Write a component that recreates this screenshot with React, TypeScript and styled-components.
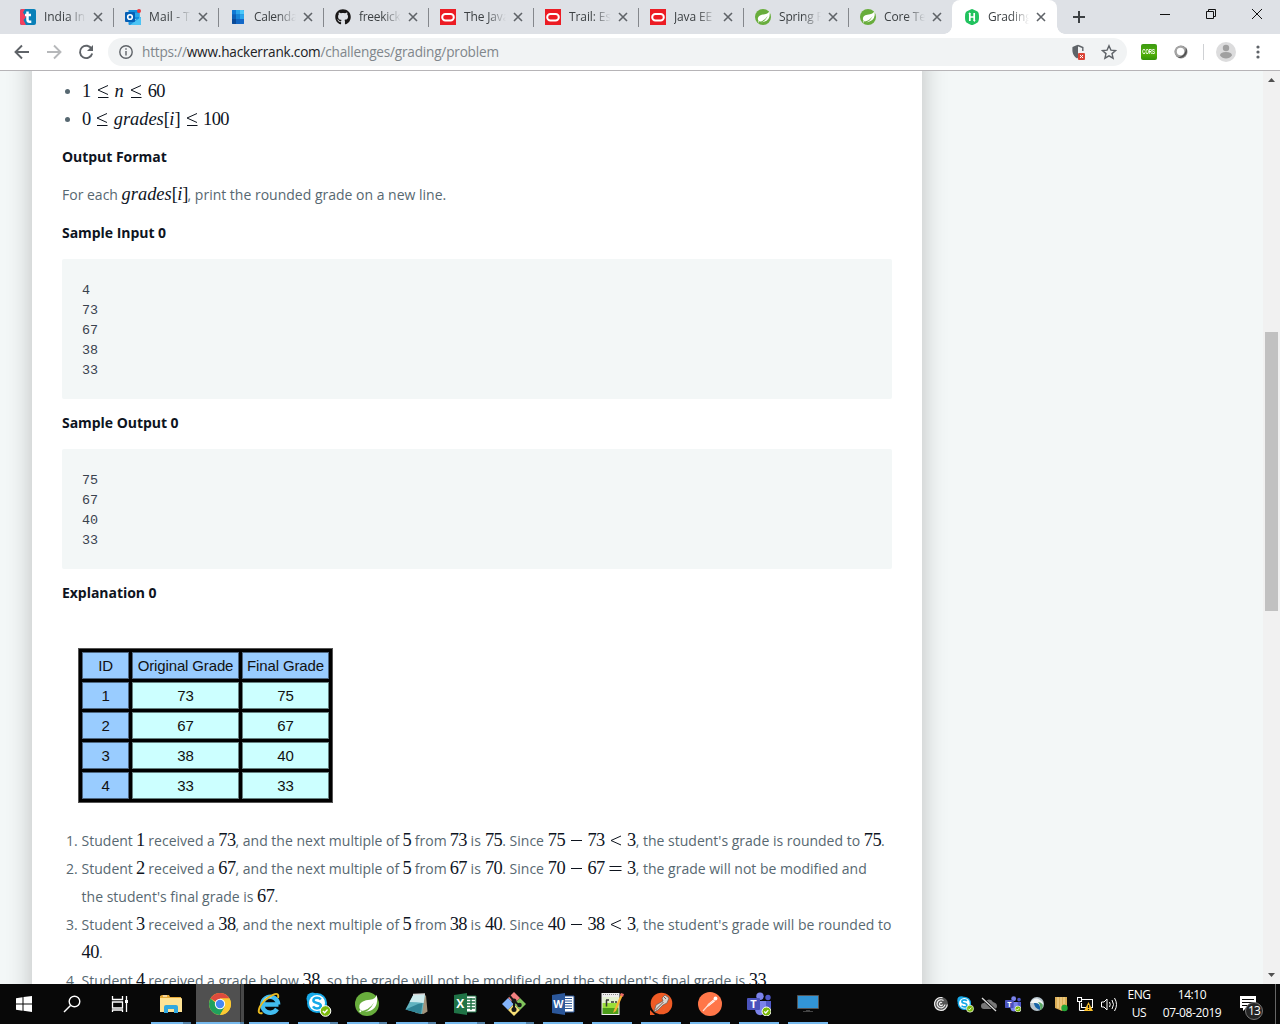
import React from "react";
import styled, { createGlobalStyle } from "styled-components";
import { FaGithub } from "react-icons/fa";

const GlobalStyle = createGlobalStyle`
  * { box-sizing: border-box; }
  body { margin: 0; overflow: hidden; background: #fff; }
`;

const uiFont = `"Open Sans", "Noto Sans", sans-serif`;

const Screen = styled.div`
  width: 1280px;
  height: 1024px;
  display: flex;
  flex-direction: column;
  overflow: hidden;
  font-family: ${uiFont};
`;

/* ---------- browser tabs ---------- */

const TabStrip = styled.header`
  height: 34px;
  flex: none;
  display: flex;
  background: #dee1e6;
  padding-left: 8px;
`;

const Tab = styled.div<{ $active?: boolean; $divider?: boolean }>`
  position: relative;
  width: 105px;
  height: 34px;
  display: flex;
  align-items: center;
  padding: 0 0 0 12px;
  background: ${(p) => (p.$active ? "#fff" : "transparent")};
  border-radius: 8px 8px 0 0;
  margin-left: ${(p) => (p.$active ? "-1px" : "0")};
  ${(p) =>
    p.$divider &&
    `&::after { content: ""; position: absolute; right: -1px; top: 8px; width: 1px; height: 19px; background: #84878c; }`}
  ${(p) =>
    p.$active &&
    `&::before, &::after { content: ""; position: absolute; bottom: 0; width: 8px; height: 8px; }
     &::before { left: -8px; background: radial-gradient(circle at 0 0, transparent 7.5px, #fff 8px); }
     &::after { right: -8px; background: radial-gradient(circle at 100% 0, transparent 7.5px, #fff 8px); }`}
`;

const Favicon = styled.span`
  width: 16px;
  height: 16px;
  flex: none;
  display: flex;
  svg { width: 16px; height: 16px; }
`;

const TabTitle = styled.span<{ $spacing: number; $w: number }>`
  width: ${(p) => p.$w}px;
  margin-left: 8px;
  overflow: hidden;
  white-space: nowrap;
  font-size: 12px;
  line-height: 18px;
  letter-spacing: ${(p) => p.$spacing}px;
  color: #3c4043;
  mask-image: linear-gradient(90deg, #000 55%, transparent 100%);
`;

const CloseMark = styled.svg`
  width: 10px;
  height: 10px;
  margin-left: 7px;
  flex: none;
  stroke: #5f6368;
  stroke-width: 1.6;
`;

const NewTab = styled.svg`
  width: 12px;
  height: 12px;
  margin: 11px 0 0 16px;
  stroke: #3c4043;
  stroke-width: 2;
`;

const WindowControls = styled.div`
  display: flex;
  margin-left: auto;
  svg { width: 46px; height: 28px; fill: none; stroke: #111; stroke-width: 1; }
`;

/* ---------- address row ---------- */

const Toolbar = styled.div`
  height: 37px;
  flex: none;
  display: flex;
  align-items: center;
  background: #fff;
  border-bottom: 1px solid #b6b4b7;
`;

const NavButtons = styled.div`
  display: flex;
  width: 108px;
  height: 36px;
  padding-left: 14px;
  align-items: center;
  gap: 16px;
  svg { width: 16px; height: 16px; fill: none; stroke: #5f6368; stroke-width: 1.9; }
`;

const Omnibox = styled.div`
  width: 1019px;
  height: 28px;
  display: flex;
  align-items: center;
  border-radius: 14px;
  background: #f1f3f4;
  padding: 0 10px 0 11px;
`;

const Url = styled.span`
  margin-left: 9px;
  font-size: 13.6px;
  line-height: 20px;
  letter-spacing: -0.2px;
  color: #80868b;
  white-space: nowrap;
  b { font-weight: 400; color: #202124; }
`;

const OmniActions = styled.span`
  display: flex;
  gap: 14px;
  margin-left: auto;
`;

const Extensions = styled.div`
  flex: 1;
  display: flex;
  align-items: center;
  padding-left: 14px;
`;

const CorsBadge = styled.span`
  width: 16px;
  height: 16px;
  border-radius: 2px;
  background: linear-gradient(#3c9a12, #52b108 60%, #349209);
  color: #fff;
  display: flex;
  align-items: center;
  justify-content: center;
  span { font: bold 8px/10px "Liberation Sans", sans-serif; transform: scale(0.55, 0.95); }
`;

const RingIcon = styled.svg`
  width: 14px;
  height: 14px;
  margin-left: 17px;
`;

const BarDivider = styled.span`
  width: 1px;
  height: 16px;
  margin: 0 12px 0 15px;
  background: #cfd1d4;
`;

const Kebab = styled.svg`
  width: 4px;
  height: 14px;
  margin-left: 20px;
  fill: #5f6368;
`;

/* ---------- page ---------- */

const Viewport = styled.main`
  height: 913px;
  flex: none;
  display: flex;
  background: #f3f7f7;
  overflow: hidden;
`;

const PageArea = styled.div`
  flex: 1;
  padding-left: 32px;
  overflow: hidden;
`;

const Sheet = styled.article`
  width: 890px;
  height: 960px;
  margin-top: -20px;
  padding: 26px 30px 0;
  background: #fff;
  box-shadow: 0 0 24px rgba(0, 0, 0, 0.23);
  color: #576871;
  font-size: 14px;
  line-height: 28px;
`;

const Constraints = styled.ul`
  list-style: none;
  margin: 0 0 10px;
  padding: 0;
`;

const Constraint = styled.li`
  display: flex;
  align-items: center;
  height: 28px;
  &::before {
    content: "";
    width: 5px;
    height: 5px;
    margin: 0 12px 0 3px;
    border-radius: 50%;
    background: #576871;
  }
`;

const Heading = styled.h3`
  margin: 0;
  height: 28px;
  color: #0e141e;
  font-size: 14px;
  font-weight: 700;
  letter-spacing: -0.04px;
  line-height: 28px;
`;

const Paragraph = styled.p`
  margin: 10px 0;
  height: 28px;
  white-space: nowrap;
`;

const Code = styled.pre`
  margin: 12px 0 10px;
  padding: 22px 20px 18px;
  border-radius: 2px;
  background: #f3f7f7;
  color: #39424e;
  font: 13.4px/20px "Liberation Mono", monospace;
`;

const MathBox = styled.span<{ $w: number }>`
  display: inline-flex;
  justify-content: space-between;
  width: ${(p) => p.$w}px;
  height: 20px;
  align-items: baseline;
  vertical-align: baseline;
  white-space: nowrap;
  color: #0e141e;
  font: 18.4px/20px "Liberation Serif", serif;
  letter-spacing: -0.55px;
  i { letter-spacing: 0; }
  svg { align-self: center; fill: none; stroke: #0e141e; stroke-width: 1; }
`;

const GradeTable = styled.div`
  display: grid;
  width: 255px;
  height: 155px;
  margin: 41px 0 24px 16px;
  grid-template-columns: 47px 107px 87px;
  grid-template-rows: repeat(5, 27px);
  gap: 3px;
  padding: 3px;
  background: #000;
  border: 1px solid #555;
`;

const Cell = styled.span<{ $head?: boolean }>`
  display: flex;
  align-items: center;
  justify-content: center;
  background: ${(p) => (p.$head ? "#99ccff" : "#ccffff")};
  border: 1px solid ${(p) => (p.$head ? "#4d6680" : "#668080")};
  color: #111;
  white-space: nowrap;
  letter-spacing: -0.14px;
  font: 15px/20px "Liberation Sans", sans-serif;
`;

const Steps = styled.ol`
  margin: 0;
  padding: 0;
  list-style: none;
`;

const Step = styled.li`
  display: flex;
`;

const StepNumber = styled.span`
  width: 19.6px;
  padding-left: 4px;
  flex: none;
`;

const StepText = styled.div`
  flex: none;
  display: flex;
  flex-direction: column;
`;

const Line = styled.span`
  display: flex;
  align-items: baseline;
  height: 28px;
  white-space: pre;
`;

const Words = styled.span<{ $w?: number }>`
  display: block;
  ${(p) => (p.$w ? `width: ${p.$w}px;` : "")}
  white-space: pre;
`;

const Scrollbar = styled.div`
  width: 17px;
  flex: none;
  display: flex;
  flex-direction: column;
  align-items: center;
  background: #f1f1f1;
`;

const ScrollArrow = styled.svg`
  width: 17px;
  height: 17px;
  fill: #505050;
`;

const Thumb = styled.div`
  width: 13px;
  height: 279px;
  margin: 244px 0 auto;
  background: #c1c1c1;
`;

/* ---------- taskbar ---------- */

const Taskbar = styled.footer`
  height: 40px;
  flex: none;
  display: flex;
  background: #080808;
  color: #fff;
`;

const SystemButtons = styled.div`
  display: flex;
  width: 147px;
`;

const Apps = styled.div`
  display: flex;
  gap: 1px;
`;

const TaskButton = styled.div<{ $active?: boolean; $open?: boolean; $stacked?: boolean }>`
  position: relative;
  width: 48px;
  height: 40px;
  display: flex;
  align-items: center;
  justify-content: center;
  background: ${(p) =>
    p.$active ? "linear-gradient(90deg, #505050 44px, #242424 44px, #242424 45px, #484848 45px)" : "transparent"};
  svg { width: 24px; height: 24px; }
  ${(p) =>
    p.$open &&
    `&::after {
      content: ""; position: absolute; bottom: 0; height: 2px;
      left: ${p.$active ? 0 : 4}px; right: ${p.$active ? 0 : 4}px;
      background: linear-gradient(90deg, #76b9ed ${p.$stacked ? (p.$active ? "44px" : "32px") : "100%"}, #5482a8 0);
    }`}
`;

const Tray = styled.div`
  margin-left: auto;
  display: flex;
  align-items: center;
`;

const TrayIcons = styled.div`
  display: flex;
  gap: 8px;
  svg { width: 16px; height: 16px; }
`;

const TrayText = styled.div<{ $w: number; $ml: number }>`
  width: ${(p) => p.$w}px;
  margin-left: ${(p) => p.$ml}px;
  display: flex;
  flex-direction: column;
  align-items: center;
  font-size: 12px;
  line-height: 18px;
  padding-bottom: 1px;
  letter-spacing: -0.4px;
  white-space: nowrap;
`;

const Notifications = styled.div`
  position: relative;
  width: 26px;
  height: 40px;
  margin: 0 10px 0 17px;
  > svg { position: absolute; left: 0; top: 11px; width: 18px; height: 16px; }
`;

const Count = styled.span`
  position: absolute;
  left: 6px;
  top: 18px;
  width: 18px;
  height: 18px;
  border-radius: 50%;
  border: 1px solid #777;
  background: #252525;
  font-size: 12px;
  line-height: 16px;
  text-align: center;
  letter-spacing: -0.8px;
`;

const DesktopEdge = styled.span`
  width: 1px;
  height: 40px;
  margin-right: 4px;
  background: #666;
`;

/* ---------- drawings ---------- */

const glyph = { fontFamily: "Open Sans, sans-serif", fontWeight: 700, fill: "#fff", textAnchor: "middle" as const };

const TimesIcon = () => (
  <svg viewBox="0 0 16 16">
    <rect width="16" height="16" rx="2" fill="#0a80b8" />
    <path d="M2 0H5L3 3.5 6 8 3.5 11 6 16H2a2 2 0 0 1-2-2V2a2 2 0 0 1 2-2z" fill="#f4405e" />
    <path d="M7.500 2.500v8q0 2.300 2.200 2.300h1.600M5 6h6" stroke="#fff" strokeWidth="2.500" fill="none" />
  </svg>
);

const OutlookIcon = () => (
  <svg viewBox="0 0 16 16">
    <path d="M3.500 1h11v9h-11z" fill="#1490df" />
    <path d="M3.500 4h5.500v4H3.500z" fill="#0a5ba8" />
    <path d="M9 4h5.500v4H9z" fill="#28a8ea" />
    <path d="M3.500 8l6 3 6.500-3v7a1 1 0 0 1-1 1H4.500a1 1 0 0 1-1-1z" fill="#1d93dd" />
    <path d="M5 16L16 8v7a1 1 0 0 1-1 1z" fill="#4cc4f5" />
    <rect y="3" width="10" height="10" rx="1" fill="#0560b6" />
    <circle cx="5" cy="8" r="2.300" fill="none" stroke="#fff" strokeWidth="1.600" />
    <circle cx="14" cy="2" r="2" fill="#e8383f" />
  </svg>
);

const CalendarIcon = () => (
  <svg viewBox="0 0 16 16">
    <rect x="2" y="1" width="12" height="14" rx="1" fill="#1166c2" />
    <path d="M3 1h3v4.500H2V2a1 1 0 0 1 1-1z" fill="#0f78d4" />
    <path d="M6 1h4v4.500H6z" fill="#2ba5ea" />
    <path d="M10 1h3a1 1 0 0 1 1 1v3.500h-4z" fill="#4bc8fa" />
    <path d="M10 5.500h4v4.500h-4z" fill="#2aa4ec" />
    <path d="M6 5.500h4v4.500h-4z" fill="#1684d8" />
    <path d="M2 5.500h4v4.500h-4z" fill="#0d5fb5" />
    <path d="M10 10h4v4a1 1 0 0 1-1 1h-3z" fill="#1368c8" />
    <path d="M2 10h4v5H3a1 1 0 0 1-1-1z" fill="#0a4a98" />
  </svg>
);

const OracleIcon = () => (
  <svg viewBox="0 0 16 16">
    <rect width="16" height="16" fill="#ec1c24" />
    <rect x="2.200" y="5" width="11.600" height="6.500" rx="3.200" fill="none" stroke="#fff" strokeWidth="2" />
  </svg>
);

const HackerRankIcon = () => (
  <svg viewBox="0 0 16 16">
    <path d="M8 0q1 0 5.500 2.600Q15 3.500 15 8t-1.500 5.400Q9 16 8 16t-5.500-2.600Q1 12.500 1 8t1.500-5.400Q7 0 8 0z" fill="#21c25e" />
    <path d="M5.800 4v8M10.200 4v8M5.800 8h4.400" stroke="#fff" strokeWidth="1.700" />
    <path d="M4.300 5L5.800 3.200 6.600 5zM9.400 11.200h2.300L10.200 13z" fill="#fff" />
  </svg>
);

const SpringIcon = () => (
  <svg viewBox="0 0 24 24">
    <circle cx="12" cy="12" r="12" fill="#68ad3c" />
    <path d="M21.800 2.700Q20.500 7 15 7.800 6 8.500 4.500 13q-.8 3 1 5Q8.500 20.500 13.500 19.300 24 16.500 21.800 2.700z" fill="#fff" />
    <path d="M4.500 19.500Q14 18.500 19 10.500 14.500 20 7 20.500z" fill="#68ad3c" />
    <circle cx="5.300" cy="19.300" r="1" fill="#fff" />
  </svg>
);

const Close = () => (
  <CloseMark viewBox="0 0 10 10"><path d="M1 1l8 8M9 1L1 9" /></CloseMark>
);

const Person = () => (
  <svg width="20" height="20" viewBox="0 0 20 20">
    <circle cx="10" cy="10" r="10" fill="#dcdcdd" />
    <circle cx="10" cy="6" r="3.200" fill="#a0a0a0" />
    <path d="M4 13.500q0-3.500 6-3.500t6 3.500q-2.200 3-6 3t-6-3z" fill="#a0a0a0" />
  </svg>
);

const LessEq = () => (
  <svg width="14" height="16" viewBox="0 0 14 16"><path d="M12 2.500L2 7 12 11.500M2 14.500h10.500" /></svg>
);
const Less = () => (
  <svg width="13" height="14" viewBox="0 0 13 14"><path d="M12 3L2 7.500 12 12" /></svg>
);
const Minus = () => (
  <svg width="13" height="14" viewBox="0 0 13 14"><path d="M1 7.500h11" /></svg>
);
const Equals = () => (
  <svg width="13" height="14" viewBox="0 0 13 14"><path d="M.5 5.500h12M.5 9.500h12" /></svg>
);

const ExplorerIcon = () => (
  <svg viewBox="0 0 24 24">
    <path d="M1 4l2-1h7l1 2h11v5H1z" fill="#e6aa38" />
    <path d="M1 6h21q1 0 1 1v13H1z" fill="#ffe394" />
    <path d="M5 21v-6q0-2 2-2h10q2 0 2 2v6h-4v-4H9v4z" fill="#32a9df" />
    <path d="M4 4h4" stroke="#fff" />
  </svg>
);

const ChromeIcon = () => (
  <svg viewBox="0 0 24 24">
    <circle cx="12" cy="12" r="11" fill="#fbc933" />
    <path d="M12 12L2.500 6.500A11 11 0 0 1 21.500 6.500H12z" fill="#dd4b3e" />
    <path d="M2.500 6.500A11 11 0 0 0 12 23l4.800-8.500H12z" fill="#20a15d" />
    <path d="M12 6.500h9.500A11 11 0 0 1 12 23l5-8z" fill="#fbc933" />
    <circle cx="12" cy="12" r="5.200" fill="#fff" />
    <circle cx="12" cy="12" r="4.200" fill="#4688f4" />
  </svg>
);

const ExplorerE = () => (
  <svg viewBox="0 0 24 24">
    <path d="M7 12.500h14.500M20 17a8 8 0 1 1 1.200-4.500" fill="none" stroke="#42bdf0" strokeWidth="4.400" />
    <path d="M6.500 9q3-4.500 8-4" fill="none" stroke="#b3e9ff" strokeWidth="1.500" />
    <path d="M21 6q1.500-6-5-3.200Q7 7 3 14.500q-3.500 8 2.500 6.500" fill="none" stroke="#e9b91f" strokeWidth="1.900" />
  </svg>
);

const CheckBadge = ({ x, y, r }: { x: number; y: number; r: number }) => (
  <g>
    <circle cx={x} cy={y} r={r} fill="#7cba0b" stroke="#fff" strokeWidth="1" />
    <path d={`M${x - r / 2} ${y}l${r / 3} ${r / 3} ${r / 1.8}-${r / 1.6}`} fill="none" stroke="#fff" strokeWidth="1.300" />
  </g>
);

const SkypeIcon = () => (
  <svg viewBox="0 0 24 24" overflow="visible">
    <circle cx="6.500" cy="6.500" r="6" fill="#19a9e8" />
    <circle cx="15" cy="15" r="6" fill="#19a9e8" />
    <circle cx="11" cy="11" r="10" fill="#16aae9" />
    <circle cx="11" cy="11" r="8" fill="#fff" />
    <path d="M14.800 7.500Q13.500 5.800 11 5.800q-3.600 0-3.600 2.500 0 2 3.600 2.600 3.800.6 3.800 2.900 0 2.600-3.800 2.600-2.800 0-4-2" stroke="#15a9e8" strokeWidth="2.500" fill="none" />
    <CheckBadge x={19.500} y={19} r={5.300} />
  </svg>
);

const NotebookIcon = () => (
  <svg viewBox="0 0 24 24">
    <path d="M11 2.500l11 1 1.500 16-4 2.500-8-1z" fill="#a2937b" />
    <path d="M9.500 2.500l11.500-.5-3 20L1.500 17.500z" fill="#62b4c0" />
    <path d="M9.500 2.500L21 2l-1.300 9Q13 10 5.500 10z" fill="#cdebed" />
    <path d="M1.500 17.500L14 12l4.500-1L17 22z" fill="#318596" />
    <path d="M9 2.500l12-.5" stroke="#d7d7d7" strokeWidth="1.500" />
  </svg>
);

const OfficeIcon = ({ letter, color }: { letter: string; color: string }) => (
  <svg viewBox="0 0 24 24">
    <path d="M12 4h11v16H12z" fill="#fff" stroke={color} />
    {letter === "X" ? (
      <path d="M14 7h8M14 10h8M14 13h8M14 16h8M18 6v12" stroke={color} strokeWidth="1.400" />
    ) : (
      <path d="M14 6.500h7M14 9h7M14 11.500h7M14 14h7M14 16.500h7" stroke={color} strokeWidth="1.200" />
    )}
    <path d="M1 3l13-2v22L1 21z" fill={color} />
    <text x="7.300" y="16.300" fontSize={letter === "X" ? 12 : 10.500} {...glyph}>{letter}</text>
  </svg>
);

const GitIcon = () => (
  <svg viewBox="0 0 24 24">
    <path d="M12 0l6 6-6 6-6-6z" fill="#f28080" />
    <path d="M18 6l6 6-6 6-6-6z" fill="#80c45c" />
    <path d="M6 6l6 6-6 6-6-6z" fill="#83b4fb" />
    <path d="M12 12l6 6-6 6-6-6z" fill="#f8df75" />
    <path d="M7 3l5 6v9M12 9l5 4" stroke="#171717" strokeWidth="2" fill="none" />
    <circle cx="12" cy="9" r="2.500" fill="#171717" />
    <circle cx="12" cy="17.500" r="2.500" fill="#171717" />
    <circle cx="17.500" cy="13" r="2.300" fill="#171717" />
  </svg>
);

const EditorIcon = () => (
  <svg viewBox="0 0 24 24">
    <path d="M1.500 1h18v22h-18z" fill="#eee" />
    <path d="M2.500 5h16v6h-16z" fill="#e2f0cf" />
    <path d="M2.500 11h16v5h-16z" fill="#9add3a" />
    <path d="M2.500 16h16v6h-16z" fill="#4c9d19" />
    <path d="M3 2.500h16" stroke="#888" strokeDasharray="1 1" />
    <path d="M6.500 8v6.500M6 8h3M11 10h3M15 10h2" stroke="#333" strokeWidth="1.500" />
    <path d="M14 18L21 2l2 1-7 16-3 2z" fill="#f6b335" />
    <path d="M20 3l1-2 3 1-1 3z" fill="#ed6c67" />
  </svg>
);

const PostmanOld = () => (
  <svg viewBox="0 0 24 24">
    <circle cx="12.500" cy="11.500" r="10.800" fill="#ef5b25" />
    <path d="M1 18v5h5z" fill="#ef5b25" />
    <path d="M5 20l2-7 7-4-1-3 3-3 4 3-2 5-4 2-5 5z" fill="#d8d6d0" stroke="#665b56" strokeWidth=".7" />
    <path d="M6.500 18l8-8M15 5l2 2" stroke="#835646" />
  </svg>
);

const PostmanNew = () => (
  <svg viewBox="0 0 24 24">
    <circle cx="12" cy="12" r="12" fill="#ff7648" />
    <path d="M8 15.500l2-3.500 5.500-4.500 1.500 1.700-6 4.800z" fill="#fff" />
    <circle cx="17.500" cy="6.500" r="1.900" fill="#fff" />
    <path d="M5 19l4-4.500 7-6.500" stroke="#ffdacb" strokeWidth="1.200" fill="none" />
  </svg>
);

const TeamsIcon = () => (
  <svg viewBox="0 0 24 24">
    <circle cx="13" cy="4.200" r="3.700" fill="#7b83eb" />
    <circle cx="21" cy="5.500" r="2.700" fill="#5059c9" />
    <path d="M17 9h7v7q-1 5-6 4z" fill="#5059c9" />
    <path d="M8 9h11v9q-2 6-7 5-4-1-4-7z" fill="#7b83eb" />
    <rect y="6" width="13" height="12" rx="1" fill="#4b53bc" />
    <text x="6.500" y="16" fontSize="11" {...glyph}>T</text>
    <CheckBadge x={19.500} y={19.500} r={4.500} />
  </svg>
);

const MonitorIcon = () => (
  <svg viewBox="0 0 24 24">
    <path d="M1.500 3.500h21v13h-21z" fill="#3295d6" stroke="#555" />
    <path d="M7 19.500h10M10 18.500h4" stroke="#444" />
  </svg>
);

const OrbIcon = () => (
  <svg viewBox="0 0 16 16">
    <circle cx="8" cy="8" r="7" fill="#555" />
    <path d="M9.500 1.700A6.400 6.400 0 1 0 14.300 8.500M10.500 4.600A4 4 0 1 0 12 8.500M9 6.700A1.600 1.600 0 1 0 9.600 8.500" stroke="#eee" strokeWidth="1.200" fill="none" />
  </svg>
);
const CloudOff = () => (
  <svg viewBox="0 0 16 16"><path d="M3 13a3 3 0 0 1 0-6 5 5 0 0 1 9-1q4 1 4 4t-3 3z" fill="#777" /><path d="M1 2l14 13" stroke="#080808" strokeWidth="3" /><path d="M1 2l14 13" stroke="#ddd" strokeWidth="1.300" /></svg>
);
const GlobeSwirl = () => (
  <svg viewBox="0 0 16 16"><circle cx="8" cy="8" r="7" fill="#b7c5ce" /><path d="M1 7q6-9 13 0l-2 6q-2-7-7-6z" fill="#f1f5f5" /><path d="M5 7q7-1 6 7-6-2-6-7z" fill="#1664a7" /><path d="M9 6q7 1 4 7l-2 1q1-5-2-8z" fill="#57a661" /></svg>
);
const FolderShield = () => (
  <svg viewBox="0 0 16 16"><path d="M2 1h12v10l-5 4-7-3z" fill="#dcae56" /><path d="M5 1v11M8 1v13M11 1v7" stroke="#f7dda0" /><circle cx="11.500" cy="12" r="3.200" fill="#25a637" /></svg>
);
const NetworkIcon = () => (
  <svg viewBox="0 0 16 16"><path d="M5 3.500h10.500v8H4.500V7M2.500 6v8.500M.5 1.500h4v4h-4zM2.500 14.500H8" fill="none" stroke="#fff" strokeWidth="1.100" /><path d="M11.500 6l4.500 9H7z" fill="#fbc02a" /><path d="M11.500 9v3M11.500 13v1" stroke="#111" strokeWidth="1.200" /></svg>
);
const VolumeIcon = () => (
  <svg viewBox="0 0 16 16"><path d="M.5 6h2.500l3-3v11l-3-3H.5zM8.500 6q1.500 2.500 0 5M11 4q3 4.500 0 9M13.500 2q4 6.500 0 13" fill="none" stroke="#fff" /></svg>
);

/* ---------- data ---------- */

const tabs = [
  { title: "India Int", icon: <TimesIcon />, spacing: -0.05 },
  { title: "Mail - TA", icon: <OutlookIcon />, spacing: 0.1 },
  { title: "Calenda", icon: <CalendarIcon />, spacing: -0.3 },
  { title: "freekick", icon: <FaGithub color="#191717" />, spacing: -0.3 },
  { title: "The Java", icon: <OracleIcon />, spacing: -0.15 },
  { title: "Trail: Ess", icon: <OracleIcon />, spacing: -0.1 },
  { title: "Java EE", icon: <OracleIcon />, spacing: -0.15 },
  { title: "Spring F", icon: <SpringIcon />, spacing: -0.2 },
  { title: "Core Te", icon: <SpringIcon />, spacing: -0.15 },
  { title: "Grading", icon: <HackerRankIcon />, spacing: -0.15 },
];

const grades = [["1", "73", "75"], ["2", "67", "67"], ["3", "38", "40"], ["4", "33", "33"]];

const steps = [
  { n: "1", a: "73", b: "75", op: <Less />, tail: ", the student's grade is rounded to ", end: "75" },
  { n: "2", a: "67", b: "70", op: <Equals />, tail: ", the grade will not be modified and", next: "the student's final grade is ", nextMath: "67" },
  { n: "3", a: "38", b: "40", op: <Less />, tail: ", the student's grade will be rounded to", next: "", nextMath: "40" },
];

const apps: { icon: React.ReactNode; active?: boolean; stacked?: boolean }[] = [
  { icon: <ExplorerIcon />, stacked: true },
  { icon: <ChromeIcon />, active: true, stacked: true },
  { icon: <ExplorerE /> },
  { icon: <SkypeIcon />, stacked: true },
  { icon: <SpringIcon />, stacked: true },
  { icon: <NotebookIcon />, stacked: true },
  { icon: <OfficeIcon letter="X" color="#207346" />, stacked: true },
  { icon: <GitIcon />, stacked: true },
  { icon: <OfficeIcon letter="W" color="#2b579a" /> },
  { icon: <EditorIcon /> },
  { icon: <PostmanOld /> },
  { icon: <PostmanNew /> },
  { icon: <TeamsIcon /> },
  { icon: <MonitorIcon /> },
];

const Num = ({ children }: { children: string }) => <MathBox $w={children.length * 8.65}>{children}</MathBox>;

export default function App() {
  return (
    <Screen>
      <GlobalStyle />
      <TabStrip>
        {tabs.map((t, i) => (
          <Tab key={i} $active={i === 9} $divider={i < 8}>
            <Favicon>{t.icon}</Favicon>
            <TabTitle $spacing={t.spacing} $w={i < 8 ? 42 : 41}>{t.title}</TabTitle>
            <Close />
          </Tab>
        ))}
        <NewTab viewBox="0 0 12 12"><path d="M6 0v12M0 6h12" /></NewTab>
        <WindowControls>
          <svg viewBox="0 0 46 28"><path d="M18 14.500h10" /></svg>
          <svg viewBox="0 0 46 28"><path d="M18.500 11.500h7v7h-7zM20.500 11v-1.500h7v7H26" /></svg>
          <svg viewBox="0 0 46 28"><path d="M18 9l10 10M28 9L18 19" /></svg>
        </WindowControls>
      </TabStrip>

      <Toolbar>
        <NavButtons>
          <svg viewBox="0 0 16 16"><path d="M15 8H2M8 1.500L1.500 8 8 14.500" /></svg>
          <svg viewBox="0 0 16 16" opacity=".45"><path d="M1 8h13M8 1.500L14.500 8 8 14.500" /></svg>
          <svg viewBox="0 0 16 16"><path d="M13.700 5A6.200 6.200 0 1 0 14.200 9.500" /><path d="M15 1v6H9z" fill="#5f6368" stroke="none" /></svg>
        </NavButtons>
        <Omnibox>
          <svg width="14" height="14" viewBox="0 0 14 14" fill="none" stroke="#5f6368" strokeWidth="1.400"><circle cx="7" cy="7" r="6.200" /><path d="M7 6v4.500M7 3.300v1.500" /></svg>
          <Url>https://<b>www.hackerrank.com</b>/challenges/grading/problem</Url>
          <OmniActions>
            <svg width="16" height="16" viewBox="0 0 16 16">
              <path d="M7 1.500l4.800 2v3.500M7 1.500l-4.800 2V7q0 4 4.300 7" fill="none" stroke="#5f6368" strokeWidth="1.400" />
              <path d="M7 1.500v12.800Q1.800 11 1.800 7V3.500z" fill="#5f6368" />
              <rect x="7" y="9" width="7" height="7" rx="1" fill="#db4437" />
              <path d="M9 11l3 3M12 11l-3 3" stroke="#fff" />
            </svg>
            <svg width="16" height="16" viewBox="0 0 16 16" fill="none" stroke="#5f6368" strokeWidth="1.400"><path d="M8 1.800l1.900 4.300 4.700.4-3.600 3.100 1.100 4.600L8 11.800l-4.100 2.400L5 9.600 1.400 6.500l4.700-.4z" /></svg>
          </OmniActions>
        </Omnibox>
        <Extensions>
          <CorsBadge><span>CORS</span></CorsBadge>
          <RingIcon viewBox="0 0 14 14"><circle cx="7" cy="7" r="6.500" fill="#8c8c8c" /><circle cx="6.500" cy="6.500" r="5.800" fill="#a4a4a4" /><path d="M12 2.500q2 4-.5 7.500Q8 14 4 12.500 12 11 12 2.500z" fill="#4c4c4c" /><circle cx="6.500" cy="6.500" r="3.700" fill="#fff" /></RingIcon>
          <BarDivider />
          <Person />
          <Kebab viewBox="0 0 4 14"><circle cx="2" cy="2" r="1.600" /><circle cx="2" cy="7" r="1.600" /><circle cx="2" cy="12" r="1.600" /></Kebab>
        </Extensions>
      </Toolbar>

      <Viewport>
        <PageArea>
          <Sheet>
            <Constraints>
              <Constraint><MathBox $w={83}>1<LessEq /><i>n</i><LessEq />60</MathBox></Constraint>
              <Constraint><MathBox $w={147}>0<LessEq /><span><i>grades</i>[<i>i</i>]</span><LessEq />100</MathBox></Constraint>
            </Constraints>
            <Heading>Output Format</Heading>
            <Paragraph>For each <MathBox $w={66}><i>grades</i>[<i>i</i>]</MathBox>, print the rounded grade on a new line.</Paragraph>
            <Heading>Sample Input 0</Heading>
            <Code>{"4\n73\n67\n38\n33"}</Code>
            <Heading>Sample Output 0</Heading>
            <Code>{"75\n67\n40\n33"}</Code>
            <Heading>Explanation 0</Heading>
            <GradeTable>
              {["ID", "Original Grade", "Final Grade"].map((h) => <Cell key={h} $head>{h}</Cell>)}
              {grades.map((row) => row.map((v, c) => <Cell key={row[0] + c} $head={c === 0}>{v}</Cell>))}
            </GradeTable>
            <Steps>
              {steps.map((s) => (
                <Step key={s.n}>
                  <StepNumber>{s.n}.</StepNumber>
                  <StepText>
                    <Line>
                      <Words $w={54.5}>Student </Words><Num>{s.n}</Num>
                      <Words $w={73.500}> received a </Words><Num>{s.a}</Num>
                      <Words $w={167}>, and the next multiple of </Words><Num>5</Num>
                      <Words $w={38.500}> from </Words><Num>{s.a}</Num>
                      <Words $w={18}> is </Words><Num>{s.b}</Num>
                      <Words $w={45.500}>. Since </Words>
                      <MathBox $w={88}>{s.b}<Minus />{s.a}{s.op}3</MathBox>
                      <Words>{s.tail}</Words>
                      {s.end && <><Num>{s.end}</Num><Words>.</Words></>}
                    </Line>
                    {s.nextMath && <Line><Words>{s.next}</Words><Num>{s.nextMath}</Num><Words>.</Words></Line>}
                  </StepText>
                </Step>
              ))}
              <Step>
                <StepNumber>4.</StepNumber>
                <Line>
                  <Words $w={54.5}>Student </Words><Num>4</Num>
                  <Words> received a grade below </Words><Num>38</Num>
                  <Words>, so the grade will not be modified and the student's final grade is </Words><Num>33</Num><Words>.</Words>
                </Line>
              </Step>
            </Steps>
          </Sheet>
        </PageArea>
        <Scrollbar>
          <ScrollArrow viewBox="0 0 17 17"><path d="M5 11l3.500-4L12 11z" /></ScrollArrow>
          <Thumb />
          <ScrollArrow viewBox="0 0 17 17"><path d="M5 6l3.500 4L12 6z" /></ScrollArrow>
        </Scrollbar>
      </Viewport>

      <Taskbar>
        <SystemButtons>
          <TaskButton><svg viewBox="0 0 24 24" fill="#fff"><path d="M4 6.300l6.500-1v6.200H4zM11.500 5.100L20 4v7.500h-8.500zM4 12.500h6.500v6.200L4 17.700zM11.500 12.500H20V20l-8.500-1.200z" /></svg></TaskButton>
          <TaskButton><svg viewBox="0 0 24 24" fill="none" stroke="#fff" strokeWidth="1.400"><circle cx="14.500" cy="9.500" r="5.300" /><path d="M10.500 13.500L4 20" /></svg></TaskButton>
          <TaskButton><svg viewBox="0 0 24 24" fill="none" stroke="#fff" strokeWidth="1.300"><path d="M4.500 4v3.500h10V4M4.500 10h10v6h-10zM4.500 20v-2h10v2M18.500 4v16" /><path d="M17 8h3v3h-3z" fill="#fff" stroke="none" /></svg></TaskButton>
        </SystemButtons>
        <Apps>
          {apps.map((a, i) => <TaskButton key={i} $open $active={a.active} $stacked={a.stacked}>{a.icon}</TaskButton>)}
        </Apps>
        <Tray>
          <TrayIcons>
            <OrbIcon /><SkypeIcon /><CloudOff /><TeamsIcon /><GlobeSwirl /><FolderShield /><NetworkIcon /><VolumeIcon />
          </TrayIcons>
          <TrayText $w={24} $ml={10}><span>ENG</span><span>US</span></TrayText>
          <TrayText $w={60} $ml={11}><span>14:10</span><span>07-08-2019</span></TrayText>
          <Notifications>
            <svg viewBox="0 0 18 16"><path d="M1 1h16v12H7l-3 3v-3H1z" fill="#fff" /><path d="M3 4.500h12M3 7.500h12M3 10.500h8" stroke="#080808" /></svg>
            <Count>13</Count>
          </Notifications>
          <DesktopEdge />
        </Tray>
      </Taskbar>
    </Screen>
  );
}
